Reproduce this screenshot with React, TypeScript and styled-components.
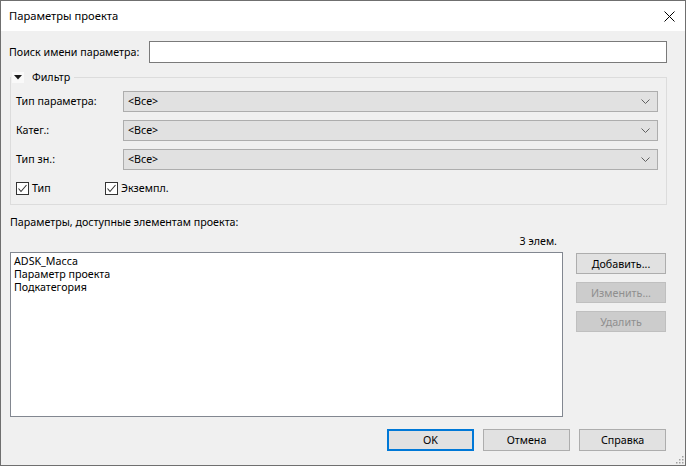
import React from "react";
import styled, { createGlobalStyle } from "styled-components";

const GlobalStyle = createGlobalStyle`
  html, body { margin: 0; padding: 0; background: #ffffff; }
  * { box-sizing: border-box; }
  body { font-family: "Noto Sans", "Liberation Sans", sans-serif; font-size: 10.7px; color: #000; }
`;

const Window = styled.div`
  position: relative;
  width: 686px;
  height: 466px;
  border: 1px solid #6f6f6f;
  background: #f0f0f0;
  display: flex;
  flex-direction: column;
`;

const TitleBar = styled.div`
  height: 30px;
  background: #ffffff;
  display: flex;
  align-items: center;
  justify-content: space-between;
  padding: 0 10px 0 8px;
  flex: none;
`;

const Title = styled.span`
  font-size: 11.2px;
  line-height: 16px;
`;

const Body = styled.div`
  flex: 1;
  display: flex;
  flex-direction: column;
  padding: 10px 18px 0 9px;
`;

const SearchRow = styled.div`
  display: flex;
  align-items: center;
  height: 22px;
  flex: none;
`;

const SearchLabel = styled.label`
  width: 139px;
  flex: none;
  line-height: 16px;
  white-space: nowrap;
  margin-left: -1px;
  padding-right: 1px;
  box-sizing: content-box;
`;

const TextInput = styled.div`
  flex: 1;
  height: 22px;
  background: #ffffff;
  border: 1px solid #7a7a7a;
`;

const Group = styled.fieldset`
  margin: 6px 0 0 0;
  padding: 6px 8px 9px 5px;
  border: 1px solid #dcdcdc;
  min-width: 0;
  flex: none;
  display: flex;
  flex-direction: column;
`;

const Legend = styled.legend`
  display: flex;
  align-items: center;
  margin-left: -5px;
  padding: 0 4px 0 1px;
  height: 16px;
  line-height: 16px;
`;

const ToggleBox = styled.span`
  width: 12px;
  height: 11px;
  display: flex;
  align-items: center;
  justify-content: center;
  background: #f9f9f9;
  margin-right: 8px;
`;

const FilterRow = styled.div`
  display: flex;
  align-items: center;
  height: 20px;
  margin-bottom: 9px;
`;

const FilterLabel = styled.span`
  width: 107px;
  flex: none;
  line-height: 16px;
`;

const Combo = styled.div`
  flex: 1;
  height: 21px;
  background: #e1e1e1;
  border: 1px solid #adadad;
  display: flex;
  align-items: center;
  justify-content: space-between;
  padding: 0 7px 0 4px;
  line-height: 16px;
`;

const CheckRow = styled.div`
  display: flex;
  align-items: center;
  height: 13px;
  margin-top: 4px;
`;

const CheckItem = styled.label<{ $w?: number }>`
  display: flex;
  align-items: center;
  width: ${(p) => (p.$w ? `${p.$w}px` : "auto")};
  line-height: 13px;
`;

const CheckBox = styled.span`
  width: 13px;
  height: 13px;
  border: 1px solid #333333;
  background: #ffffff;
  display: flex;
  align-items: center;
  justify-content: center;
  margin-right: 3px;
  flex: none;
`;

const SectionLabel = styled.div`
  margin-top: 9px;
  line-height: 16px;
  flex: none;
`;

const CountLabel = styled.div`
  margin-top: 3px;
  width: 547px;
  text-align: right;
  line-height: 16px;
  flex: none;
`;

const ListRow = styled.div`
  display: flex;
  align-items: flex-start;
  margin-top: 3px;
  flex: none;
`;

const ListBox = styled.div`
  width: 553px;
  height: 165px;
  background: #ffffff;
  border: 1px solid #828790;
  padding: 2px 3px;
`;

const ListItem = styled.div`
  line-height: 13px;
  height: 13px;
  white-space: nowrap;
`;

const SideButtons = styled.div`
  display: flex;
  flex-direction: column;
  gap: 8px;
  margin-left: 13px;
  margin-top: 1px;
`;

const Button = styled.button<{ $disabled?: boolean; $default?: boolean; $w: number; $h: number }>`
  width: ${(p) => p.$w}px;
  height: ${(p) => p.$h}px;
  font-family: inherit;
  font-size: 10.7px;
  line-height: 14px;
  padding: 0;
  background: ${(p) => (p.$disabled ? "#cccccc" : "#e1e1e1")};
  color: ${(p) => (p.$disabled ? "#8f8f8f" : "#000000")};
  border: ${(p) =>
    p.$default ? "2px solid #0078d7" : p.$disabled ? "1px solid #bfbfbf" : "1px solid #adadad"};
  cursor: default;
`;

const Footer = styled.div`
  display: flex;
  justify-content: flex-end;
  gap: 9px;
  margin-top: 12px;
  margin-right: 1px;
  flex: none;
`;

const Grip = styled.svg`
  position: absolute;
  right: 1px;
  bottom: 1px;
`;

const Chevron = () => (
  <svg width="9" height="5" viewBox="0 0 9 5">
    <polyline points="0.5,0.5 4.5,4.5 8.5,0.5" fill="none" stroke="#606060" strokeWidth="1" />
  </svg>
);

const Check = () => (
  <svg width="11" height="11" viewBox="0 0 11 11">
    <polyline points="1.5,5.5 4,8.5 9.5,2" fill="none" stroke="#333" strokeWidth="1.1" />
  </svg>
);

const filters = [
  { label: "Тип параметра:" },
  { label: "Катег.:" },
  { label: "Тип зн.:" },
];

const items = ["ADSK_Масса", "Параметр проекта", "Подкатегория"];

export default function App() {
  return (
    <>
      <GlobalStyle />
      <Window>
        <TitleBar>
          <Title>Параметры проекта</Title>
          <svg width="11" height="11" viewBox="0 0 11 11">
            <path d="M0.5 0.5 L10.5 10.5 M10.5 0.5 L0.5 10.5" stroke="#000" strokeWidth="1" />
          </svg>
        </TitleBar>
        <Body>
          <SearchRow>
            <SearchLabel>Поиск имени параметра:</SearchLabel>
            <TextInput />
          </SearchRow>
          <Group>
            <Legend>
              <ToggleBox>
                <svg width="8" height="5" viewBox="0 0 8 5">
                  <polygon points="0,0 8,0 4,4.5" fill="#1a1a1a" />
                </svg>
              </ToggleBox>
              Фильтр
            </Legend>
            {filters.map((f) => (
              <FilterRow key={f.label}>
                <FilterLabel>{f.label}</FilterLabel>
                <Combo>
                  <span>&lt;Все&gt;</span>
                  <Chevron />
                </Combo>
              </FilterRow>
            ))}
            <CheckRow>
              <CheckItem $w={89}>
                <CheckBox>
                  <Check />
                </CheckBox>
                Тип
              </CheckItem>
              <CheckItem>
                <CheckBox>
                  <Check />
                </CheckBox>
                Экземпл.
              </CheckItem>
            </CheckRow>
          </Group>
          <SectionLabel>Параметры, доступные элементам проекта:</SectionLabel>
          <CountLabel>3 элем.</CountLabel>
          <ListRow>
            <ListBox>
              {items.map((it) => (
                <ListItem key={it}>{it}</ListItem>
              ))}
            </ListBox>
            <SideButtons>
              <Button $w={90} $h={21}>Добавить...</Button>
              <Button $w={90} $h={21} $disabled>Изменить...</Button>
              <Button $w={90} $h={21} $disabled>Удалить</Button>
            </SideButtons>
          </ListRow>
          <Footer>
            <Button $w={87} $h={22} $default>OK</Button>
            <Button $w={87} $h={22}>Отмена</Button>
            <Button $w={87} $h={22}>Справка</Button>
          </Footer>
        </Body>
        <Grip width="9" height="9" viewBox="0 0 9 9">
          {[
            [7, 1],
            [7, 4],
            [4, 4],
            [7, 7],
            [4, 7],
            [1, 7],
          ].map(([x, y]) => (
            <rect key={`${x}-${y}`} x={x} y={y} width="1.5" height="1.5" fill="#a0a0a0" />
          ))}
        </Grip>
      </Window>
    </>
  );
}
